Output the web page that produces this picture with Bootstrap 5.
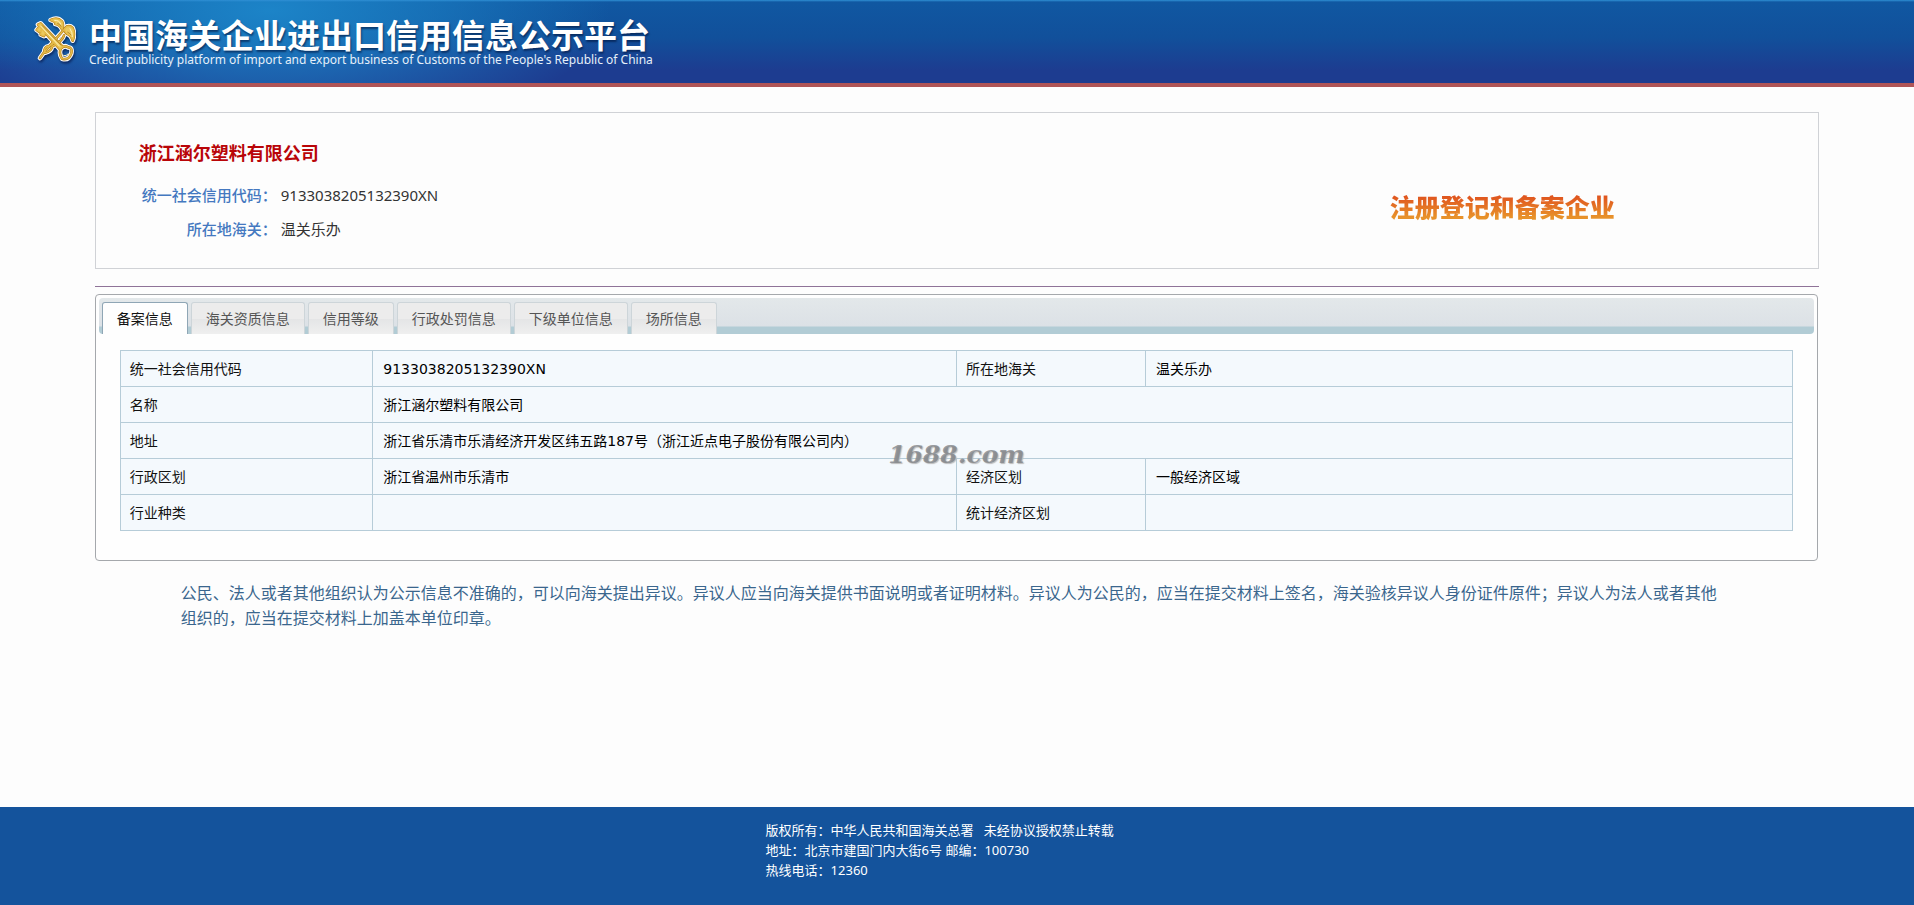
<!DOCTYPE html>
<html lang="zh-CN">
<head>
<meta charset="utf-8">
<meta name="viewport" content="width=device-width, initial-scale=1">
<title>中国海关企业进出口信用信息公示平台</title>
<link href="https://cdn.jsdelivr.net/npm/bootstrap@5.3.0/dist/css/bootstrap.min.css" rel="stylesheet">
<style>
  body { font-family: "Noto Sans", "Noto Sans CJK SC", sans-serif; font-size: 14px; background: #fdfdfd; color: #222; }
  .site-head {
    height: 87px; padding-left: 34px; border-bottom: 4px solid #b05557;
    background:
      linear-gradient(#2f8fd4, transparent 2px),
      radial-gradient(ellipse 340px 130px at 270px 10px, #1c84c8, rgba(28,132,200,.55) 50%, transparent),
      linear-gradient(#1058a2, #11509b 45%, #1d3c90 85%);
  }
  .emblem { width: 42px; height: 47px; margin-right: 13px; filter: drop-shadow(1px 2px 1px rgba(0,0,40,.5)); }
  .brand { padding-top: 18px; }
  .brand-cn { font-size: 33px; line-height: 36px; font-weight: 700; color: #fff; text-shadow: 1px 2px 2px rgba(0,20,60,.6); }
  .brand-en { font-family: "Noto Sans", sans-serif; font-size: 12px; line-height: 12px; color: #e6f0fa; }
  .page-wrap { width: 90.1%; margin: 25px auto 0; }
  .company { border: 1px solid #d0d2d6; padding: 27px 24px 26px 43px; min-height: 157px; }
  .company h1 { font-size: 18px; line-height: 26px; font-weight: 700; color: #b90508; margin: 0 0 17px; }
  .company dl { font-size: 15px; line-height: 24px; grid-template-columns: 138px 1fr; column-gap: 4px; row-gap: 10px; }
  .company dt { color: #4478c0; font-weight: 500; text-align: right; }
  .company dd { color: #333; margin: 0; }
  .stamp {
    font-size: 25px; line-height: 32px; font-weight: 900;
    background: linear-gradient(#e0561f 20%, #e8922a 80%);
    -webkit-background-clip: text; background-clip: text; color: transparent;
  }
  .rule-line { height: 1px; background: #8f7398; margin: 17px 0 7px; }
  .tab-box { border: 1px solid #a5a8ac; border-radius: 4px; padding: 3px; margin-right: 1px; background: #fefefe; min-height: 267px; }
  .tab-strip { padding: 4px 3px 0; gap: 3px; height: 36px; border-radius: 4px; border: 0;
    background: linear-gradient(#e3e8ea, #dce1e6 28px, #b2ccd5 29px); }
  .tab-strip .nav-link { height: 32px; padding: 0 14px; margin: 0; line-height: 28px; color: #555;
    border: 1px solid #cdd5d9; border-bottom: 0; border-radius: 3px 3px 0 0;
    background: linear-gradient(#ececec 50%, #e4e5e6 51%, #efefef); }
  .tab-strip .nav-link.active { background: #fefefe; color: #111; border-color: #8fa6b5; }
  .tab-body { padding: 16px 21px 24px; }
  .record { border-collapse: collapse; table-layout: fixed; width: 100%; color: #111; background: #f4f9fd; }
  .record th, .record td { border: 1px solid #b6ccd8; height: 36px; padding: 0 9px; font-weight: 400; line-height: 20px; text-align: left; }
  .record td { padding-left: 10px; font-family: "DejaVu Sans", "Noto Sans CJK SC", sans-serif; color: #000; }
  .watermark { left: 50%; top: 142px; transform: translateX(-50%); font: italic 700 25px/36px "DejaVu Serif", serif; color: rgba(125,128,132,.75); text-shadow: 1px 1px 1px #bbb; pointer-events: none; }
  .notice { font-size: 16px; line-height: 25px; color: #3a668d; margin: 20px 86px 24px; padding-right: 10px; }
  .site-foot { background: #14539c; color: #fff; font-size: 13px; line-height: 20px; padding: 13px 16px 25px 40%; }
</style>
</head>
<body class="d-flex flex-column min-vh-100">
<header class="site-head d-flex align-items-start">
  <svg class="emblem flex-shrink-0 mt-3" viewBox="42 34 126 141" aria-hidden="true">
    <defs>
      <g id="emblem-shape" stroke-linecap="round" stroke-linejoin="round">
        <path d="M60 160 72 143 140 66" fill="none"/>
        <path d="M92 46Q112 36 126 50Q132 62 126 74Q120 60 106 58Q110 52 92 46Z"/>
        <path d="M140 66Q150 62 158 70Q166 88 158 108Q154 92 142 88Q132 82 134 72Z"/>
        <path d="M74 144Q70 126 88 124Q104 116 106 104M76 144Q94 140 96 126Q128 108 132 92" fill="none"/>
        <path d="M54 60 62 56 128 126 120 134ZM58 66 50 76 58 82 64 76 62 90 72 94 76 84" />
        <path d="M122 132Q116 148 126 162Q146 168 154 146Q158 128 144 128Q134 120 122 132Z" fill="none"/>
      </g>
    </defs>
    <use href="#emblem-shape" stroke="#fff" stroke-width="14"/>
    <use href="#emblem-shape" stroke="#b98420" stroke-width="8"/>
    <use href="#emblem-shape" fill="#ecc95e" stroke="#e6bd4a" stroke-width="4"/>
    <g fill="none" stroke="#fff3ba" stroke-width="3" stroke-linecap="round">
      <path d="M104 47Q118 46 122 58M150 72Q158 84 157 96M62 64 118 124M128 150Q134 158 144 148"/>
    </g>
    <path d="M66 62 124 122M112 56Q120 58 124 66M142 82Q150 86 154 92" fill="none" stroke="#9a6a18" stroke-width="2"/>
  </svg>
  <div class="brand text-nowrap">
    <div class="brand-cn">中国海关企业进出口信用信息公示平台</div>
    <div class="brand-en">Credit publicity platform of import and export business of Customs of the People's Republic of China</div>
  </div>
</header>

<main class="page-wrap">
  <section class="company row g-0 align-items-center">
    <div class="col-8 align-self-start">
      <h1>浙江涵尔塑料有限公司</h1>
      <dl class="d-grid mb-0">
        <dt>统一社会信用代码：</dt><dd>9133038205132390XN</dd>
        <dt>所在地海关：</dt><dd>温关乐办</dd>
      </dl>
    </div>
    <div class="col-4 text-center pt-4 mt-2 pe-4"><span class="stamp me-2">注册登记和备案企业</span></div>
  </section>

  <div class="rule-line"></div>

  <section class="tab-box position-relative">
    <div class="tab-strip nav nav-tabs" role="tablist">
      <button class="nav-link active" type="button" role="tab" aria-selected="true" data-bs-toggle="tab" data-bs-target="#filing">备案信息</button>
      <button class="nav-link" type="button" role="tab" aria-selected="false" data-bs-toggle="tab" data-bs-target="#qualification">海关资质信息</button>
      <button class="nav-link" type="button" role="tab" aria-selected="false" data-bs-toggle="tab" data-bs-target="#credit">信用等级</button>
      <button class="nav-link" type="button" role="tab" aria-selected="false" data-bs-toggle="tab" data-bs-target="#penalty">行政处罚信息</button>
      <button class="nav-link" type="button" role="tab" aria-selected="false" data-bs-toggle="tab" data-bs-target="#units">下级单位信息</button>
      <button class="nav-link" type="button" role="tab" aria-selected="false" data-bs-toggle="tab" data-bs-target="#places">场所信息</button>
    </div>
    <div class="tab-content tab-body">
      <div class="tab-pane active" id="filing" role="tabpanel">
        <table class="record">
          <colgroup><col style="width:15.1%"><col style="width:34.9%"><col style="width:11.3%"><col style="width:38.7%"></colgroup>
          <tbody>
            <tr><th scope="row">统一社会信用代码</th><td>9133038205132390XN</td><th scope="row">所在地海关</th><td>温关乐办</td></tr>
            <tr><th scope="row">名称</th><td colspan="3">浙江涵尔塑料有限公司</td></tr>
            <tr><th scope="row">地址</th><td colspan="3">浙江省乐清市乐清经济开发区纬五路187号（浙江近点电子股份有限公司内）</td></tr>
            <tr><th scope="row">行政区划</th><td>浙江省温州市乐清市</td><th scope="row">经济区划</th><td>一般经济区域</td></tr>
            <tr><th scope="row">行业种类</th><td></td><th scope="row">统计经济区划</th><td></td></tr>
          </tbody>
        </table>
      </div>
      <div class="tab-pane" id="qualification" role="tabpanel"></div>
      <div class="tab-pane" id="credit" role="tabpanel"></div>
      <div class="tab-pane" id="penalty" role="tabpanel"></div>
      <div class="tab-pane" id="units" role="tabpanel"></div>
      <div class="tab-pane" id="places" role="tabpanel"></div>
    </div>
    <div class="watermark position-absolute">1688.com</div>
  </section>

  <p class="notice">公民、法人或者其他组织认为公示信息不准确的，可以向海关提出异议。异议人应当向海关提供书面说明或者证明材料。异议人为公民的，应当在提交材料上签名，海关验核异议人身份证件原件；异议人为法人或者其他组织的，应当在提交材料上加盖本单位印章。</p>
</main>

<footer class="site-foot mt-auto">
  <div>版权所有：中华人民共和国海关总署 &nbsp; 未经协议授权禁止转载</div>
  <div>地址：北京市建国门内大街6号 邮编：100730</div>
  <div>热线电话：12360</div>
</footer>
<script src="https://cdn.jsdelivr.net/npm/bootstrap@5.3.0/dist/js/bootstrap.bundle.min.js"></script>
</body>
</html>
